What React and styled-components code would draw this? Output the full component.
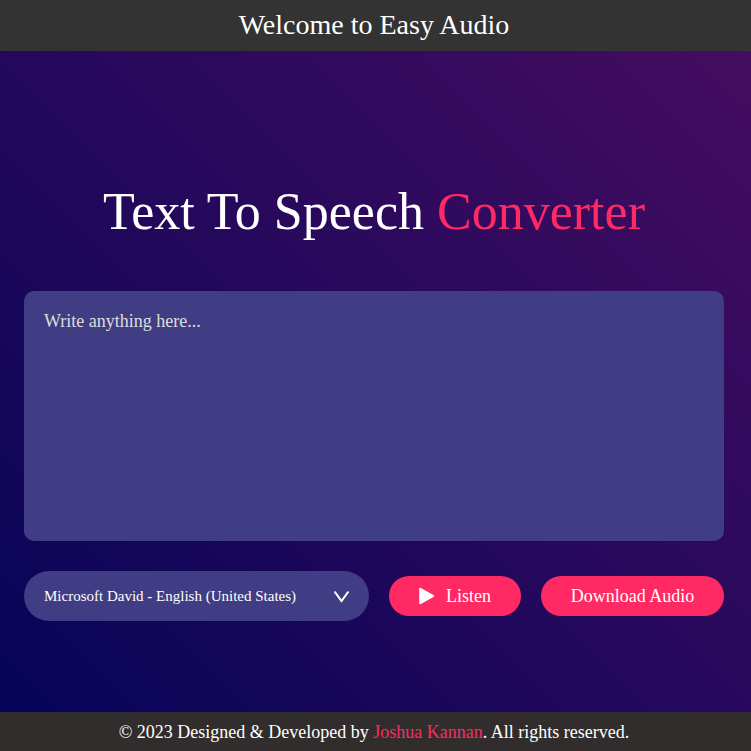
import React, { useState } from "react";
import styled, { createGlobalStyle } from "styled-components";

const GlobalStyle = createGlobalStyle`
  *, *::before, *::after { box-sizing: border-box; }
  body { margin: 0; background: #010758; }
  body, button, select, textarea { font-family: "Liberation Serif", serif; }
`;

const Page = styled.div`
  min-height: 100vh;
  display: flex;
  flex-direction: column;
  background: linear-gradient(45deg, #040458, #470d60);
  color: #fff;
`;

const Header = styled.header`
  display: flex;
  justify-content: center;
  padding: 8px 3px 9px 0;
  background: #333;
  font-size: 28px;
  line-height: 34px;
`;

const Main = styled.main`
  flex: 1;
  display: flex;
  flex-direction: column;
  justify-content: center;
  padding: 0 27px 0 24px;
`;

const Title = styled.h1`
  margin: 41px 0 50px;
  font-size: 52px;
  font-weight: 400;
  line-height: 58px;
  text-align: center;
`;

const Accent = styled.span`
  color: #ff2963;
`;

const TextBox = styled.textarea`
  display: block;
  width: 100%;
  height: 250px;
  margin-bottom: 30px;
  padding: 20px;
  border: 0;
  border-radius: 10px;
  outline: 0;
  resize: none;
  background: #403d84;
  color: #fff;
  font-size: 18px;
  line-height: 20px;

  &::placeholder { color: #ddd; opacity: 1; }
`;

const Controls = styled.div`
  display: flex;
  align-items: center;
  gap: 20px;
`;

const SelectField = styled.div`
  position: relative;
  flex: 1;
  min-width: 0;
`;

const VoiceSelect = styled.select`
  appearance: none;
  width: 100%;
  height: 50px;
  padding: 0 50px 0 20px;
  border: 0;
  border-radius: 25px;
  outline: 0;
  background: #403d84;
  color: #fff;
  font-size: 15px;
`;

const Chevron = styled.svg`
  position: absolute;
  top: 20px;
  right: 20px;
  width: 15px;
  height: 12px;
  pointer-events: none;
`;

const Button = styled.button`
  display: flex;
  align-items: center;
  justify-content: center;
  gap: 11px;
  min-width: ${(p) => (p.$wide ? 183 : 132)}px;
  height: 40px;
  padding: 0 20px;
  border: 0;
  border-radius: 20px;
  background: #ff2963;
  color: #fff;
  font-size: 18px;
  white-space: nowrap;
  cursor: pointer;
`;

const PlayIcon = styled.svg`
  width: 16px;
  height: 18px;
  flex: none;
`;

const Footer = styled.footer`
  padding: 9px 3px 8px 0;
  background: #322d2d;
  font-size: 18px;
  line-height: 22px;
  text-align: center;
`;

const AuthorLink = styled.a`
  color: #ff2963;
  text-decoration: none;
`;

export default function App() {
  const [text, setText] = useState("");

  return (
    <Page>
      <GlobalStyle />
      <Header>Welcome to Easy Audio</Header>
      <Main>
        <Title>
          Text To Speech <Accent>Converter</Accent>
        </Title>
        <TextBox
          aria-label="Text to convert"
          placeholder="Write anything here..."
          value={text}
          onChange={(e) => setText(e.target.value)}
        />
        <Controls>
          <SelectField>
            <VoiceSelect aria-label="Voice">
              <option>Microsoft David - English (United States)</option>
            </VoiceSelect>
            <Chevron viewBox="0 0 15 12" aria-hidden="true">
              <path d="M1 1.2 7.5 10 14 1.2" fill="none" stroke="#fff" strokeWidth="2" strokeLinecap="round" />
            </Chevron>
          </SelectField>
          <Button type="button">
            <PlayIcon viewBox="0 0 16 18" aria-hidden="true">
              <path d="M1 1.5 14.5 9 1 16.5Z" fill="#fff" stroke="#fff" strokeWidth="1.5" strokeLinejoin="round" />
            </PlayIcon>
            Listen
          </Button>
          <Button type="button" $wide>Download Audio</Button>
        </Controls>
      </Main>
      <Footer>
        © 2023 Designed &amp; Developed by <AuthorLink href="#author">Joshua Kannan</AuthorLink>. All rights reserved.
      </Footer>
    </Page>
  );
}
